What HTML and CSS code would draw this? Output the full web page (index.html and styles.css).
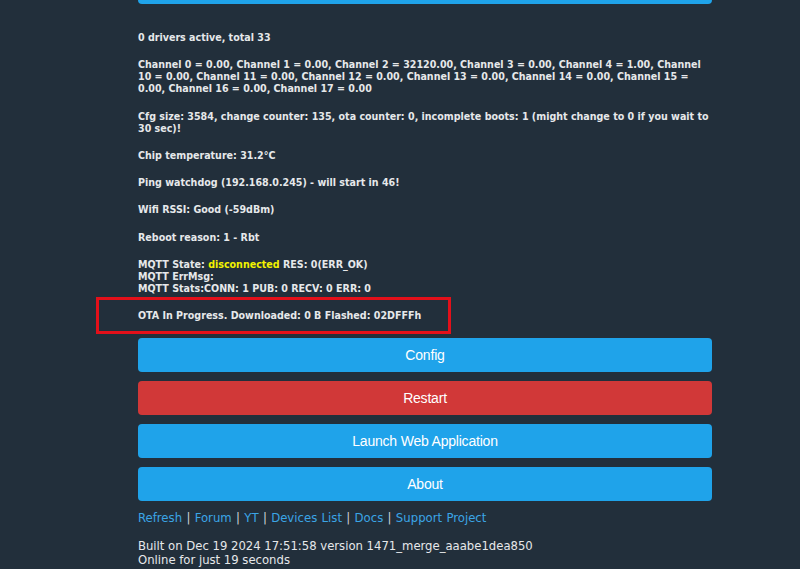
FILE: index.html
```html
<!DOCTYPE html>
<html>
<head>
<meta charset="utf-8">
<link rel="stylesheet" href="styles.css">
</head>
<body>
<div class="page">
  <div class="col">
    <div class="topbtn"></div>
    <div class="info">
      <div class="blk">0 drivers active, total 33</div>
      <div class="blk">Channel 0 = 0.00, Channel 1 = 0.00, Channel 2 = 32120.00, Channel 3 = 0.00, Channel 4 = 1.00, Channel 10 = 0.00, Channel 11 = 0.00, Channel 12 = 0.00, Channel 13 = 0.00, Channel 14 = 0.00, Channel 15 = 0.00, Channel 16 = 0.00, Channel 17 = 0.00</div>
      <div class="blk">Cfg size: 3584, change counter: 135, ota counter: 0, incomplete boots: 1 (might change to 0 if you wait to 30 sec)!</div>
      <div class="blk">Chip temperature: 31.2°C</div>
      <div class="blk">Ping watchdog (192.168.0.245) - will start in 46!</div>
      <div class="blk">Wifi RSSI: Good (-59dBm)</div>
      <div class="blk">Reboot reason: 1 - Rbt</div>
      <div class="blk">MQTT State: <span class="yel">disconnected</span> RES: 0(ERR_OK)<br>MQTT ErrMsg:<br>MQTT Stats:CONN: 1 PUB: 0 RECV: 0 ERR: 0</div>
      <div class="blk ota">OTA In Progress. Downloaded: 0 B Flashed: 02DFFFh</div>
    </div>
    <div class="btns">
      <div class="btn">Config</div>
      <div class="btn red">Restart</div>
      <div class="btn">Launch Web Application</div>
      <div class="btn">About</div>
    </div>
    <div class="links"><a>Refresh</a> | <a>Forum</a> | <a>YT</a> | <a>Devices List</a> | <a>Docs</a> | <a>Support Project</a></div>
    <div class="built">Built on Dec 19 2024 17:51:58 version 1471_merge_aaabe1dea850<br>Online for just 19 seconds</div>
  </div>
</div>
</body>
</html>
```
FILE: styles.css
```css
html, body {
  margin: 0;
  padding: 0;
  background: #222f3b;
  height: 100%;
  overflow: hidden;
}
.page {
  padding-left: 138px;
  width: 574px;
}
.col {
  display: flex;
  flex-direction: column;
}
.topbtn {
  height: 4px;
  background: #1fa3ea;
  border-radius: 0 0 4px 4px;
}
.info {
  padding-top: 27px;
  font-family: "DejaVu Sans Condensed", "DejaVu Sans", sans-serif;
  font-weight: bold;
  font-size: 10.6px;
  line-height: 12px;
  color: #e6e8ea;
}
.blk {
  margin-bottom: 15.3px;
}
.yel {
  color: #f2f200;
}
.ota {
  position: relative;
  margin-bottom: 0;
}
.ota::before {
  content: "";
  position: absolute;
  left: -42px;
  top: -12px;
  width: 349px;
  height: 31px;
  border: 3px solid #e3101a;
}
.btns {
  margin-top: 16.5px;
  display: flex;
  flex-direction: column;
  gap: 9px;
}
.btn {
  height: 34px;
  line-height: 34px;
  background: #1fa3ea;
  border-radius: 4px;
  text-align: center;
  color: #ffffff;
  font-family: "Liberation Sans", Arial, sans-serif;
  font-size: 14px;
  letter-spacing: -0.2px;
}
.btn.red {
  background: #d13838;
}
.links {
  margin-top: 10px;
  font-family: "DejaVu Sans Condensed", "DejaVu Sans", sans-serif;
  font-size: 13px;
  line-height: 14px;
  color: #d0d4d8;
  word-spacing: 0.6px;
}
.links a {
  color: #3ba5e6;
}
.built {
  margin-top: 14px;
  font-family: "DejaVu Sans Condensed", "DejaVu Sans", sans-serif;
  font-size: 12.95px;
  line-height: 14px;
  color: #e6e8ea;
}
```
